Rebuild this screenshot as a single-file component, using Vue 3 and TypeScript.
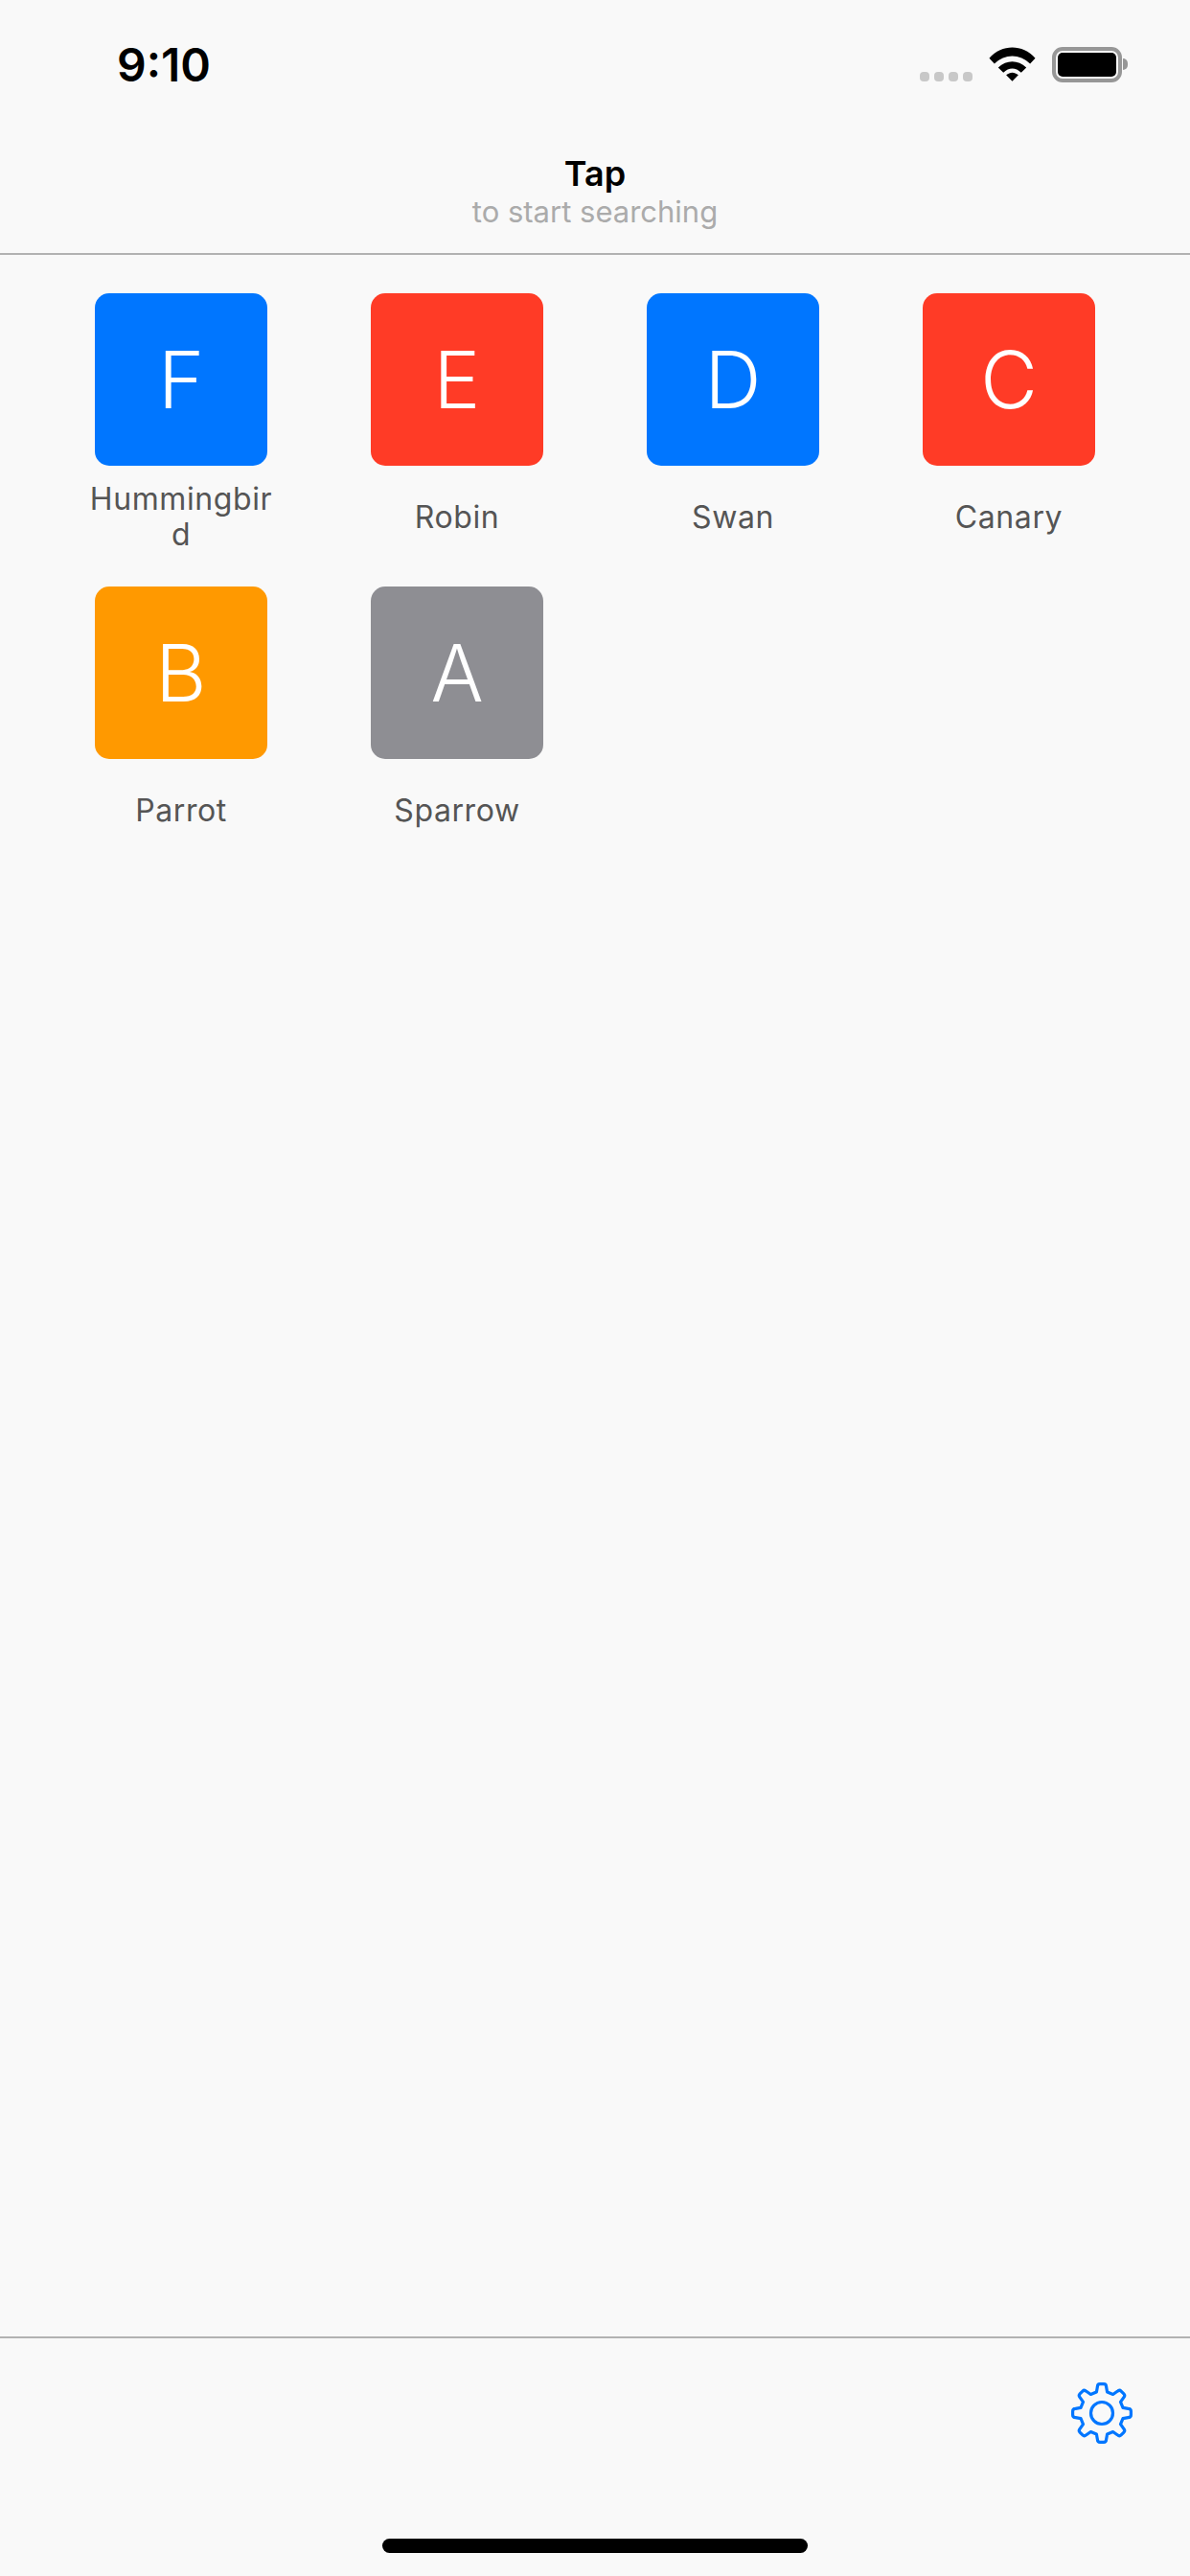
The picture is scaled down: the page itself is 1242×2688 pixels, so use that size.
<script setup lang="ts">
type Bird = { letter: string; name: string; color: string }

const birds: Bird[] = [
  { letter: 'F', name: 'Hummingbird', color: '#0076ff' },
  { letter: 'E', name: 'Robin', color: '#ff3b26' },
  { letter: 'D', name: 'Swan', color: '#0076ff' },
  { letter: 'C', name: 'Canary', color: '#ff3b26' },
  { letter: 'B', name: 'Parrot', color: '#ff9900' },
  { letter: 'A', name: 'Sparrow', color: '#8e8e93' },
]

// gear outline, 8 teeth, built once
function gearPath(): string {
  const cx = 32
  const cy = 32
  const pts: string[] = []
  for (let i = 0; i < 8; i++) {
    const a = (i * Math.PI) / 4 - Math.PI / 2
    const at = (r: number, off: number) => {
      const x = cx + r * Math.cos(a) - off * Math.sin(a)
      const y = cy + r * Math.sin(a) + off * Math.cos(a)
      return `${x.toFixed(2)} ${y.toFixed(2)}`
    }
    pts.push(`${i === 0 ? 'M' : 'L'}${at(22, -5.6)}`)
    pts.push(`L${at(27.5, -4.6)}`)
    pts.push(`Q${at(30.4, -4.5)} ${at(30.4, -2)}`)
    pts.push(`L${at(30.4, 2)}`)
    pts.push(`Q${at(30.4, 4.5)} ${at(27.5, 4.6)}`)
    pts.push(`L${at(22, 5.6)}`)
  }
  return pts.join(' ') + ' Z'
}
const gear = gearPath()
</script>

<template>
  <div class="screen">
    <header class="top">
      <div class="status">
        <span class="time">9:10</span>
        <div class="status-icons">
          <div class="signal"><i></i><i></i><i></i><i></i></div>
          <svg class="wifi" width="49" height="36" viewBox="0 0 50 36">
            <path d="M0.5 11.5 C14 -3.5 36 -3.5 49.5 11.5 L44 17.5 C33 6.5 17 6.5 6 17.5 Z" fill="#000" />
            <path d="M10 21.5 C19 13 31 13 40 21.5 L34.5 27 C28.5 21 21.5 21 15.5 27 Z" fill="#000" />
            <path d="M18.5 29.5 C23 26 27 26 31.5 29.5 L25 36 Z" fill="#000" />
          </svg>
          <div class="battery"><span class="cell"></span></div>
          <span class="nub"></span>
        </div>
      </div>
      <div class="title">
        <span class="title-main">Tap</span>
        <span class="title-sub">to start searching</span>
      </div>
    </header>

    <main class="grid">
      <div v-for="b in birds" :key="b.letter" class="bird">
        <div class="tile" :style="{ background: b.color }">{{ b.letter }}</div>
        <div class="label">
          <span>{{ b.name }}</span>
        </div>
      </div>
    </main>

    <footer class="bottom">
      <svg class="gear" width="64" height="64" viewBox="0 0 64 64" fill="none" stroke="#0076ff" stroke-width="3.2" stroke-linejoin="round">
        <path :d="gear" />
        <circle cx="32" cy="32" r="11.5" />
      </svg>
      <span class="home"></span>
    </footer>
  </div>
</template>

<style>
html,
body {
  margin: 0;
  background: #f9f9f9;
}
</style>

<style scoped>
.screen {
  width: 1242px;
  height: 2688px;
  background: #f9f9f9;
  display: flex;
  flex-direction: column;
  font-family: Inter, 'Liberation Sans', sans-serif;
  overflow: hidden;
}

/* header */
.top {
  height: 264px;
  border-bottom: 2px solid #b2b2b2;
  display: flex;
  flex-direction: column;
  flex: none;
}
.status {
  height: 132px;
  padding: 0 0 0 122px;
  display: flex;
  justify-content: space-between;
  align-items: flex-start;
}
.time {
  margin-top: 40px;
  font-size: 48px;
  line-height: 56px;
  font-weight: 600;
  color: #000;
}
.status-icons {
  margin-top: 49px;
  margin-right: 65px;
  display: flex;
  align-items: flex-start;
}
.signal {
  display: flex;
  gap: 5px;
  margin-top: 26px;
  margin-right: 17px;
}
.signal i {
  width: 10px;
  height: 10px;
  border-radius: 4px;
  background: #c8c8c8;
}
.wifi {
  margin-right: 17px;
}
.battery {
  width: 73px;
  height: 37px;
  box-sizing: border-box;
  border: 4px solid #979797;
  border-radius: 11px;
  padding: 2px;
  background: #f9f9f9;
}
.cell {
  display: block;
  height: 100%;
  background: #000;
  border-radius: 5px;
}
.nub {
  width: 5px;
  height: 12px;
  margin-top: 12px;
  margin-left: 1px;
  background: #979797;
  border-radius: 0 6px 6px 0;
}
.title {
  display: flex;
  flex-direction: column;
  align-items: center;
  margin-top: 29px;
}
.title-main {
  font-size: 36px;
  line-height: 40px;
  font-weight: 600;
  color: #000;
}
.title-sub {
  font-size: 31px;
  line-height: 39px;
  color: #ababab;
}

/* grid */
.grid {
  flex: 1;
  display: grid;
  grid-template-columns: repeat(4, 288px);
  grid-auto-rows: 306px;
  justify-content: center;
  padding-top: 40px;
  align-content: start;
}
.bird {
  display: flex;
  flex-direction: column;
  align-items: center;
}
.tile {
  width: 180px;
  height: 180px;
  border-radius: 15px;
  display: flex;
  align-items: center;
  justify-content: center;
  color: #fff;
  font-size: 82px;
  font-weight: 300;
}
.label {
  width: 196px;
  height: 96px;
  display: flex;
  align-items: center;
  justify-content: center;
  text-align: center;
  font-size: 32px;
  line-height: 37px;
  letter-spacing: 0.6px;
  color: #555;
  word-break: break-all;
  margin-top: 5px;
}

/* toolbar */
.bottom {
  position: relative;
  height: 250px;
  flex: none;
  border-top: 2px solid #b2b2b2;
  box-sizing: border-box;
}
.gear {
  position: absolute;
  left: 1118px;
  top: 46px;
}
.home {
  position: absolute;
  left: 399px;
  bottom: 24px;
  width: 444px;
  height: 15px;
  border-radius: 8px;
  background: #000;
}
</style>
